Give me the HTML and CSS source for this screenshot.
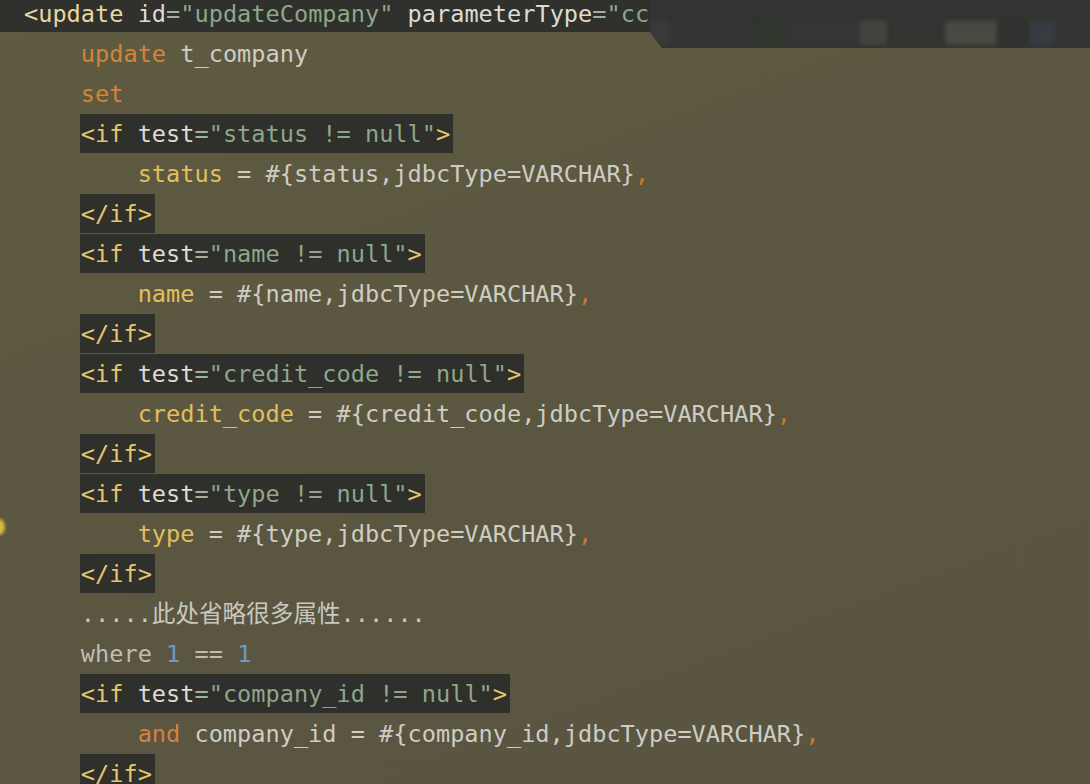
FILE: index.html
```html
<!DOCTYPE html>
<html lang="zh-CN">
<head>
  <meta charset="UTF-8">
  <meta name="viewport" content="width=device-width, initial-scale=1.0">
  <title>updateCompany</title>
  <link rel="stylesheet" href="styles.css">
</head>
<body>

<div class="editor">
  <!-- riga di testa, con la parte sfocata a destra -->
  <div class="topbar">
    <div class="head"><span class="t-top">&lt;update</span> <span class="attr">id</span><span class="eq">=</span><span class="str">"updateCompany"</span> <span class="attr">parameterType</span><span class="eq">=</span><span class="str">"cc</span></div>
    <div class="blur">
      <span class="blk b1"></span>
      <span class="blk b2"></span>
      <span class="blk b3"></span>
      <span class="blk b4"></span>
      <span class="blk b5"></span>
      <span class="blk b6"></span>
      <span class="blk b7"></span>
      <span class="blk b8"></span>
      <span class="blk b9"></span>
    </div>
  </div>

  <div class="code">
    <div class="line i1"><span class="kw">update</span> <span class="txt">t_company</span></div>
    <div class="line i1"><span class="kw">set</span></div>

    <div class="line i1"><span class="hl"><span class="tag">&lt;if</span> <span class="attr">test</span><span class="eq">=</span><span class="str">"status != null"</span><span class="tag">&gt;</span></span></div>
    <div class="line i2"><span class="fld">status</span><span class="txt"> = #{status,jdbcType=VARCHAR}</span><span class="cm">,</span></div>
    <div class="line i1"><span class="hl"><span class="tag">&lt;/if&gt;</span></span></div>

    <div class="line i1"><span class="hl"><span class="tag">&lt;if</span> <span class="attr">test</span><span class="eq">=</span><span class="str">"name != null"</span><span class="tag">&gt;</span></span></div>
    <div class="line i2"><span class="fld">name</span><span class="txt"> = #{name,jdbcType=VARCHAR}</span><span class="cm">,</span></div>
    <div class="line i1"><span class="hl"><span class="tag">&lt;/if&gt;</span></span></div>

    <div class="line i1"><span class="hl"><span class="tag">&lt;if</span> <span class="attr">test</span><span class="eq">=</span><span class="str">"credit_code != null"</span><span class="tag">&gt;</span></span></div>
    <div class="line i2"><span class="fld">credit_code</span><span class="txt"> = #{credit_code,jdbcType=VARCHAR}</span><span class="cm">,</span></div>
    <div class="line i1"><span class="hl"><span class="tag">&lt;/if&gt;</span></span></div>

    <div class="line i1"><span class="hl"><span class="tag">&lt;if</span> <span class="attr">test</span><span class="eq">=</span><span class="str">"type != null"</span><span class="tag">&gt;</span></span></div>
    <div class="line i2"><span class="fld">type</span><span class="txt"> = #{type,jdbcType=VARCHAR}</span><span class="cm">,</span></div>
    <div class="line i1"><span class="hl"><span class="tag">&lt;/if&gt;</span></span></div>

    <div class="line i1"><span class="note">.....此处省略很多属性......</span></div>
    <div class="line i1"><span class="where">where</span> <span class="num">1</span> <span class="where">==</span> <span class="num">1</span></div>

    <div class="line i1"><span class="hl"><span class="tag">&lt;if</span> <span class="attr">test</span><span class="eq">=</span><span class="str">"company_id != null"</span><span class="tag">&gt;</span></span></div>
    <div class="line i2"><span class="kw">and</span><span class="txt"> company_id = #{company_id,jdbcType=VARCHAR}</span><span class="cm">,</span></div>
    <div class="line i1 last"><span class="hl"><span class="tag">&lt;/if&gt;</span></span></div>
  </div>

  <!-- icona del margine, tagliata dal bordo -->
  <span class="gutter-mark"></span>
</div>

</body>
</html>
```

FILE: styles.css
```css
html, body {
  margin: 0;
  height: 100%;
  overflow: hidden;
}

body {
  background: linear-gradient(160deg, #5f5b40 0%, #5b5640 50%, #5a5540 100%);
  font-family: "DejaVu Sans Mono", "Noto Sans CJK SC", monospace;
  font-size: 23.6px;
  color: #cdcdc4;
}

.editor {
  position: relative;
  height: 100%;
}

.topbar {
  position: relative;
  height: 34px;
}

.head {
  width: 628px;
  height: 32px;
  line-height: 28px;
  padding-left: 24px;
  background-color: #30302c;
  white-space: pre;
  overflow: hidden;
}

.blur {
  position: absolute;
  top: 0;
  left: 650px;
  right: 0;
  height: 48px;
  display: flex;
  align-items: flex-end;
  padding-bottom: 3px;
  box-sizing: border-box;
  background-color: #333331;
  clip-path: polygon(0 0, 100% 0, 100% 100%, 12px 100%, 0 32px);
}

.blk {
  height: 24px;
  filter: blur(2px);
}

.b1 { width: 20px; background-color: #3a3a3b; }
.b2 { width: 85px; background-color: #343533; }
.b3 { width: 30px; background-color: #30382d; }
.b4 { width: 75px; background-color: #353535; }
.b5 { width: 28px; background-color: #44443f; }
.b6 { width: 57px; background-color: #333432; }
.b7 { width: 53px; background-color: #464a41; }
.b8 { width: 32px; background-color: #313330; }
.b9 { width: 25px; background-color: #373c42; }

.code {
  padding-left: 24px;
}

.line {
  height: 40px;
  line-height: 40px;
  white-space: pre;
}

.line.last {
  height: 30px;
}

.i1 { padding-left: 4ch; }
.i2 { padding-left: 8ch; }

.hl {
  display: inline-block;
  height: 39px;
  margin-left: -1px;
  padding: 0 3px 0 1px;
  background-color: #2f2f2b;
}

.t-top { color: #e9d7a0; }
.tag { color: #e6c56a; }
.attr { color: #dcdcd4; }
.eq { color: #9cb398; }
.str { color: #8ea68a; }
.kw { color: #d3843a; }
.fld { color: #e2bf5e; }
.txt { color: #cdcdc4; }
.cm { color: #c87a35; }
.num { color: #6c9bc4; }
.where { color: #bdbdb4; }
.note { color: #c8c8c0; }

.gutter-mark {
  position: absolute;
  left: -7px;
  top: 519px;
  width: 12px;
  height: 16px;
  border-radius: 50%;
  background-color: #d9b83c;
  filter: blur(1.5px);
}
```
